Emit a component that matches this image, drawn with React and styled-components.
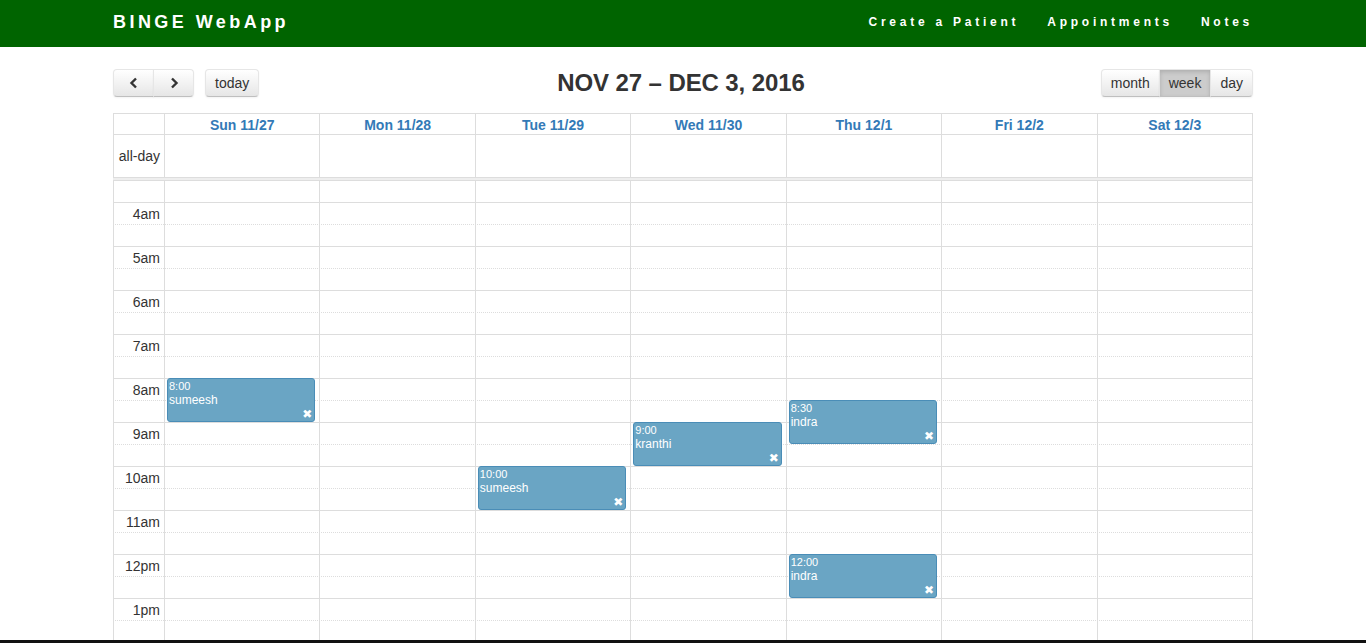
import React from "react";
import styled, { createGlobalStyle, css } from "styled-components";

const GlobalStyle = createGlobalStyle`
  body {
    margin: 0;
    font-family: "Liberation Sans", Helvetica, Arial, sans-serif;
    font-size: 14px;
    color: #333;
    background: #fff;
  }
`;

const days = ["Sun 11/27", "Mon 11/28", "Tue 11/29", "Wed 11/30", "Thu 12/1", "Fri 12/2", "Sat 12/3"];

const events = [
  { day: 0, start: 8, time: "8:00", title: "sumeesh" },
  { day: 2, start: 10, time: "10:00", title: "sumeesh" },
  { day: 3, start: 9, time: "9:00", title: "kranthi" },
  { day: 4, start: 8.5, time: "8:30", title: "indra" },
  { day: 4, start: 12, time: "12:00", title: "indra" },
];

const hourLabel = (h) => {
  if (h === 12) return "12pm";
  return h < 12 ? `${h}am` : `${h - 12}pm`;
};

// visible slots: 3:30 to 1:30pm, half hour each
const slots = [];
for (let t = 4; t <= 13.5; t += 0.5) slots.push(t);

const SLOT = 22;
const FIRST = 21;
const topFor = (t) => FIRST + (t - 4) * SLOT * 2;

const Navbar = styled.nav`
  height: 47px;
  background: #006400;
`;

const NavInner = styled.div`
  width: 1140px;
  height: 100%;
  margin: 0 auto;
  display: flex;
  align-items: center;
  justify-content: space-between;
`;

const Brand = styled.a`
  color: #fff;
  font-size: 18px;
  font-weight: bold;
  letter-spacing: 3.45px;
  margin-top: -3px;
`;

const NavLinks = styled.ul`
  display: flex;
  gap: 28px;
  list-style: none;
  margin: -3px 0 0 0;
  padding: 0;
`;

const NavLink = styled.li`
  color: #fff;
  font-size: 12px;
  font-weight: bold;
  letter-spacing: 3.75px;
`;

const Container = styled.div`
  width: 1140px;
  margin: 0 auto;
`;

const Toolbar = styled.div`
  display: flex;
  align-items: center;
  justify-content: space-between;
  margin: 22px 0 16px;
  height: 28px;
`;

const Side = styled.div`
  display: flex;
  gap: 11px;
  width: 200px;
  justify-content: ${(p) => (p.$right ? "flex-end" : "flex-start")};
`;

const Group = styled.div`
  display: flex;
`;

const Button = styled.button`
  height: 28px;
  padding: 0 9px;
  font-family: inherit;
  font-size: 14px;
  color: #333;
  border: 1px solid;
  border-color: #e6e6e6 #e6e6e6 #bfbfbf;
  background: linear-gradient(#fff, #e6e6e6);
  box-shadow: inset 0 1px 0 rgba(255, 255, 255, 0.2), 0 1px 2px rgba(0, 0, 0, 0.05);
  border-radius: 4px;
  display: flex;
  align-items: center;
  justify-content: center;
  ${(p) =>
    p.$grouped &&
    css`
      border-radius: 0;
      margin-left: -1px;
      &:first-child {
        border-radius: 4px 0 0 4px;
        margin-left: 0;
      }
      &:last-child {
        border-radius: 0 4px 4px 0;
      }
    `}
  ${(p) =>
    p.$active &&
    css`
      background: #ccc;
      box-shadow: inset 0 2px 4px rgba(0, 0, 0, 0.15), 0 1px 2px rgba(0, 0, 0, 0.05);
    `}
  ${(p) => p.$icon && "width: 41px;"}
`;

const Title = styled.h2`
  margin: 0 4px 0 0;
  font-size: 24px;
  font-weight: bold;
  letter-spacing: -0.1px;
  color: #333;
`;

const Calendar = styled.div`
  border-right: 1px solid #ddd;
`;

const Row = styled.div`
  display: grid;
  grid-template-columns: 51px repeat(7, 1fr);
  border-top: 1px solid #ddd;
`;

const HeadCell = styled.div`
  border-left: 1px solid #ddd;
  height: 18px;
  padding-top: 2px;
  line-height: 18px;
  text-align: center;
  font-weight: bold;
  color: #337ab7;
`;

const AllDayCell = styled.div`
  border-left: 1px solid #ddd;
  height: 42px;
  display: flex;
  align-items: center;
  justify-content: flex-end;
  padding-right: 4px;
`;

const Divider = styled.div`
  height: 2px;
  background: #eee;
  border-top: 1px solid #ddd;
  border-bottom: 1px solid #ddd;
`;

const Body = styled.div`
  position: relative;
`;

const Slot = styled.div`
  display: grid;
  grid-template-columns: 51px 1fr;
  height: ${(p) => (p.$first ? FIRST : SLOT - 1)}px;
  border-top: ${(p) => (p.$first ? "none" : p.$half ? "1px dotted #ddd" : "1px solid #ddd")};
`;

const Axis = styled.div`
  display: flex;
  align-items: center;
  justify-content: flex-end;
  padding-right: 4px;
`;

const Columns = styled.div`
  position: absolute;
  inset: 0;
  display: grid;
  grid-template-columns: 51px repeat(7, 1fr);
`;

const Column = styled.div`
  position: relative;
  border-left: 1px solid #ddd;
`;

const Event = styled.div`
  position: absolute;
  left: 2px;
  right: 4px;
  height: 44px;
  background: #6aa5c4;
  border: 1px solid #4a8db7;
  border-radius: 3px;
  color: #fff;
  padding: 1px 1px;
  box-sizing: border-box;
`;

const EventTime = styled.div`
  font-size: 11px;
  line-height: 13px;
`;

const EventTitle = styled.div`
  font-size: 12px;
  line-height: 14px;
`;

const Close = styled.span`
  position: absolute;
  right: 2px;
  bottom: 0;
  font-size: 12px;
  line-height: 13px;
  font-family: "DejaVu Sans", sans-serif;
  font-weight: bold;
`;

const WindowEdge = styled.div`
  position: fixed;
  left: 0;
  right: 0;
  bottom: 0;
  height: 3px;
  background: #111;
`;

const Chevron = ({ dir }) => (
  <svg width="10" height="12" viewBox="0 0 10 12">
    <path
      d={dir === "left" ? "M7 1.5 L2.5 6 L7 10.5" : "M3 1.5 L7.5 6 L3 10.5"}
      fill="none"
      stroke="#333"
      strokeWidth="2.4"
    />
  </svg>
);

export default function App() {
  return (
    <>
      <GlobalStyle />
      <Navbar>
        <NavInner>
          <Brand>BINGE WebApp</Brand>
          <NavLinks>
            <NavLink>Create a Patient</NavLink>
            <NavLink>Appointments</NavLink>
            <NavLink>Notes</NavLink>
          </NavLinks>
        </NavInner>
      </Navbar>
      <Container>
        <Toolbar>
          <Side>
            <Group>
              <Button $grouped $icon>
                <Chevron dir="left" />
              </Button>
              <Button $grouped $icon>
                <Chevron dir="right" />
              </Button>
            </Group>
            <Button>today</Button>
          </Side>
          <Title>NOV 27 – DEC 3, 2016</Title>
          <Side $right>
            <Group>
              <Button $grouped>month</Button>
              <Button $grouped $active>week</Button>
              <Button $grouped>day</Button>
            </Group>
          </Side>
        </Toolbar>
        <Calendar>
          <Row>
            <HeadCell />
            {days.map((d) => (
              <HeadCell key={d}>{d}</HeadCell>
            ))}
          </Row>
          <Row>
            <AllDayCell>all-day</AllDayCell>
            {days.map((d) => (
              <AllDayCell key={d} />
            ))}
          </Row>
          <Divider />
          <Body>
            <Slot $first>
              <Axis />
            </Slot>
            {slots.map((t) => (
              <Slot key={t} $half={t % 1 !== 0}>
                <Axis>{t % 1 === 0 ? hourLabel(t) : ""}</Axis>
              </Slot>
            ))}
            <Columns>
              <Column />
              {days.map((d, i) => (
                <Column key={d}>
                  {events
                    .filter((e) => e.day === i)
                    .map((e) => (
                      <Event key={e.time} style={{ top: topFor(e.start) }}>
                        <EventTime>{e.time}</EventTime>
                        <EventTitle>{e.title}</EventTitle>
                        <Close>✖</Close>
                      </Event>
                    ))}
                </Column>
              ))}
            </Columns>
          </Body>
        </Calendar>
      </Container>
      <WindowEdge />
    </>
  );
}
